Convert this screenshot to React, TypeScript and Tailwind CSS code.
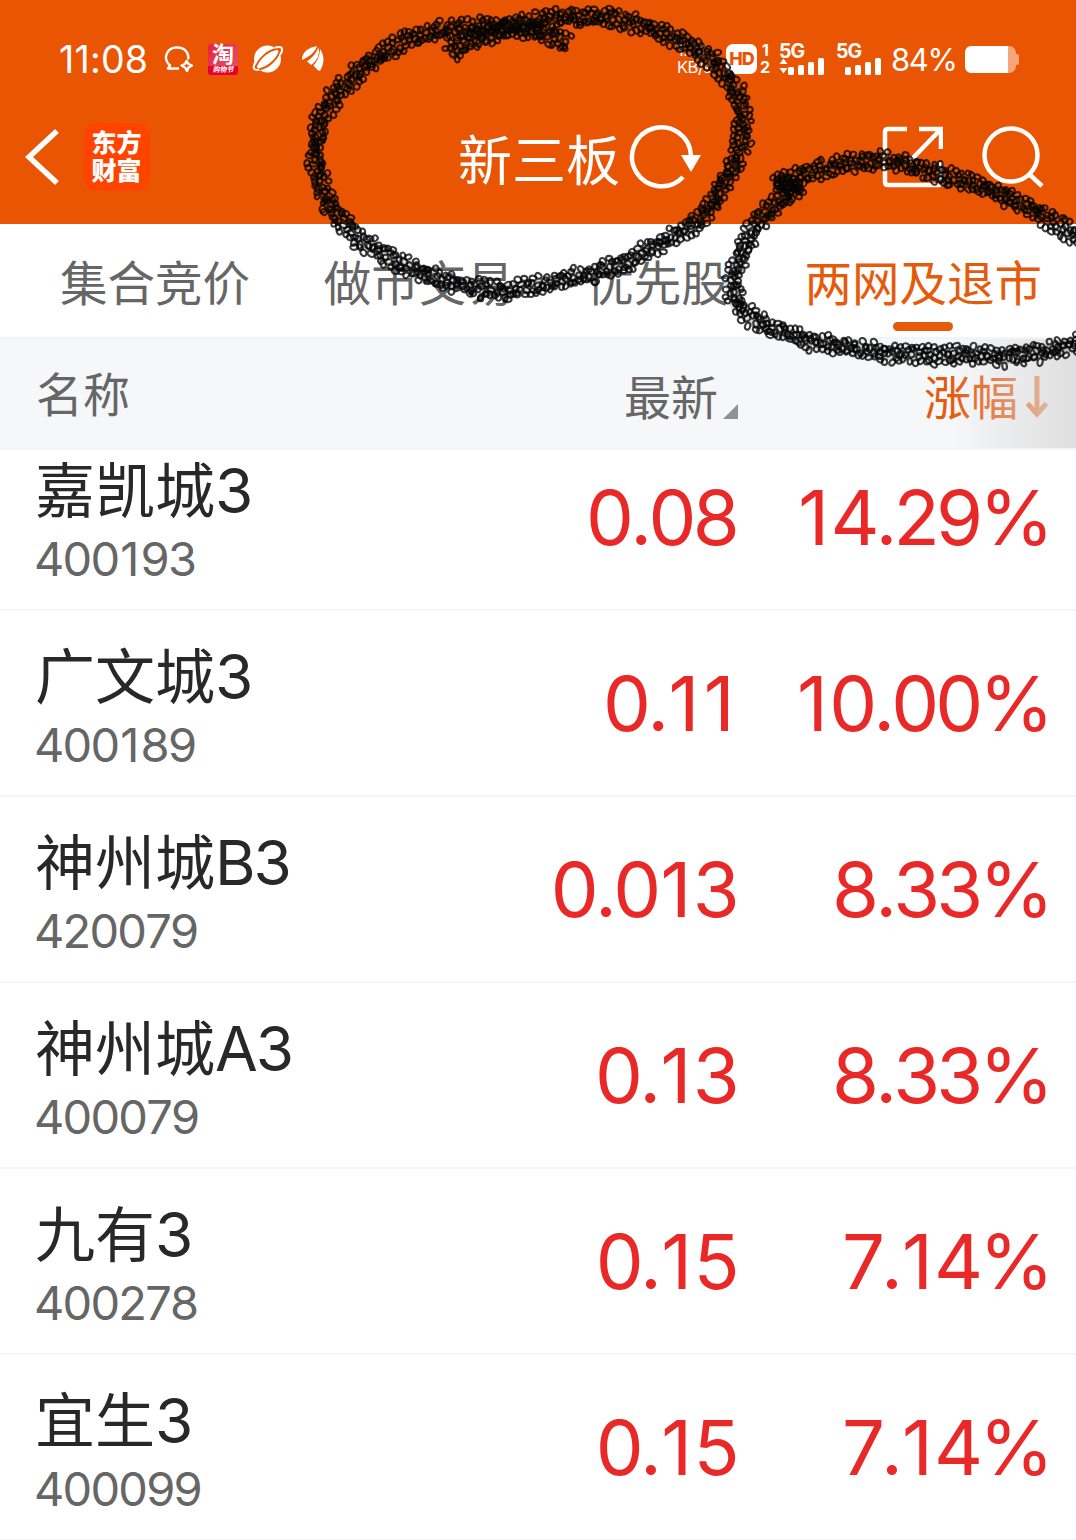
import React from 'react';

interface Stock {
  name: string;
  suffix: string;
  code: string;
  price: string;
  change: string;
}

const stocks: Stock[] = [
  { name: '嘉凯城', suffix: '3', code: '400193', price: '0.08', change: '14.29%' },
  { name: '广文城', suffix: '3', code: '400189', price: '0.11', change: '10.00%' },
  { name: '神州城', suffix: 'B3', code: '420079', price: '0.013', change: '8.33%' },
  { name: '神州城', suffix: 'A3', code: '400079', price: '0.13', change: '8.33%' },
  { name: '九有', suffix: '3', code: '400278', price: '0.15', change: '7.14%' },
  { name: '宜生', suffix: '3', code: '400099', price: '0.15', change: '7.14%' },
];

type Point = [number, number];

const titleLoop: Point[] = [
  [447, 53], [473, 41], [507, 28], [540, 20], [570, 17], [610, 17], [647, 27], [683, 41], [713, 61],
  [735, 87], [743, 113], [742, 143], [730, 173], [713, 203], [693, 226], [660, 243], [627, 262],
  [593, 273], [547, 284], [507, 291], [483, 289], [443, 281], [400, 263], [360, 240], [333, 211],
  [319, 180], [315, 153], [320, 122], [333, 97], [363, 67], [400, 43], [440, 30], [480, 27], [513, 27],
  [540, 32], [568, 43],
];

const tabLoop: Point[] = [
  [1080, 240], [1047, 218], [1020, 203], [987, 188], [953, 178], [920, 167], [887, 160], [860, 161],
  [830, 167], [797, 177], [775, 185], [800, 186], [767, 210], [750, 233], [740, 257], [732, 283],
  [736, 303], [753, 320], [780, 332], [813, 342], [853, 349], [887, 353], [927, 355], [967, 355],
  [1010, 357], [1043, 352], [1080, 342],
];

// small seeded generator so the brush looks the same on every render
const seeded = (seed: number) => () => {
  seed = (seed * 48271) % 2147483647;
  return seed / 2147483647;
};

const lanes = [-6.6, 2.2, -2.2, 6.6];

const brush = (points: Point[], seed: number) => {
  const rand = seeded(seed);
  const rings: { x: number; y: number; rx: number; ry: number; a: number }[] = [];
  for (let i = 0; i < points.length - 1; i++) {
    const [x1, y1] = points[i];
    const [x2, y2] = points[i + 1];
    const len = Math.hypot(x2 - x1, y2 - y1);
    const nx = -(y2 - y1) / len;
    const ny = (x2 - x1) / len;
    const count = Math.round(len / 1.4);
    for (let k = 0; k < count; k++) {
      const t = (k + rand() * 2.4) / count;
      // jittered lanes keep the beads spread over the whole band
      const off = lanes[k % 4] + (rand() * 2 - 1) * 3;
      rings.push({
        x: x1 + (x2 - x1) * t + nx * off,
        y: y1 + (y2 - y1) * t + ny * off,
        rx: 2.2 + rand() * 0.8,
        ry: 2.7 + rand() * 1.2,
        a: rand() * 180,
      });
    }
  }
  return rings;
};

const rings = [...brush(titleLoop, 7101), ...brush(tabLoop, 191337)];

const toLine = (points: Point[]) => points.map((p) => p.join(',')).join(' ');

const Scribbles: React.FC = () => (
  <svg className="absolute left-0 top-0 z-20 pointer-events-none" width="1076" height="400" viewBox="0 0 1076 400" fill="none">
    <g stroke="#000" strokeOpacity="0.14" strokeWidth="14" strokeLinejoin="bevel">
      <polyline points={toLine(titleLoop)} />
      <polyline points={toLine(tabLoop)} />
    </g>
    <g stroke="#050505" strokeWidth="2.1" strokeOpacity="0.78">
      {rings.map((r, i) => (
        <ellipse key={i} cx={r.x} cy={r.y} rx={r.rx} ry={r.ry} transform={`rotate(${r.a} ${r.x} ${r.y})`} />
      ))}
    </g>
  </svg>
);

// gives the narrow "1" some room on both sides
const Digits: React.FC<{ value: string; oneClass: string }> = ({ value, oneClass }) => (
  <>
    {value.split('').map((ch, i) => (
      <span key={i} className={ch === '1' ? oneClass : undefined}>{ch}</span>
    ))}
  </>
);

const Signal: React.FC<{ arrows?: boolean }> = ({ arrows }) => (
  <div className="w-[46px] h-[31px] flex flex-col justify-between">
    <span className="font-bold text-[19.5px] leading-[14px] tracking-[-1px]">5G</span>
    <svg width="46" height="17" viewBox="0 0 46 17" fill="white" className="-mt-[2px] overflow-visible">
      {arrows && <path d="M0.5 6L4.500 0.5L8.500 6zM0.5 10H8.500L4.500 15.500z" />}
      <rect x="9" y="9" width="6" height="8" rx="1.500" />
      <rect x="19" y="7" width="6" height="10" rx="1.500" />
      <rect x="29" y="4" width="6" height="13" rx="1.500" />
      <rect x="39" y="0" width="6" height="17" rx="1.500" />
    </svg>
  </div>
);

const StatusBar: React.FC = () => (
  <div className="h-[92px] pt-[26px] pl-[59px] pr-[57px] flex items-center justify-between text-white">
    <div className="flex items-center">
      <span className="w-[104px] pt-[2px] text-[37.5px] leading-[40px] tracking-[0.2px]">11:08</span>
      <svg width="31" height="30" viewBox="0 0 31 30" fill="none" stroke="white" strokeWidth="2.400" strokeLinejoin="round">
        <path d="M16 24.500H5L7 21.500C-1 14 4 3.500 14 3.500C22 3.500 26.500 9.500 25 15.500" />
        <path d="M23.500 17L25.500 20L29 21.500L25.500 23.500L24 27L22 23.500L18.500 21.500L22 20z" />
      </svg>
      <div className="ml-[14px] w-[30px] h-[31px] rounded-[3px] bg-linear-to-br from-[#e8203c] to-[#e8506a] flex flex-col items-center">
        <span className="h-[22px] text-[22px] leading-[21px] font-bold">淘</span>
        <span className="w-full h-[9px] rounded-b-[3px] bg-[#e6002d] text-center text-[7px] leading-[8px] font-bold italic">购物节</span>
      </div>
      <svg className="ml-[14px]" width="32" height="30" viewBox="0 0 32 30" fill="none">
        <circle cx="15.500" cy="15" r="13.500" fill="white" />
        <path d="M3 25C6 15 16 5.500 27 4.500" stroke="#ea5504" strokeWidth="2" />
        <path d="M5 25.500C15 25 25 16 28 6.500" stroke="#ea5504" strokeWidth="2" />
        <path d="M23 3.500Q31 1.500 30 6.500Q29.500 9 28 11M3 18.500Q-1 27.500 7.500 25.500" stroke="white" strokeWidth="2" />
      </svg>
      <svg className="ml-[18px]" width="22" height="26" viewBox="0 0 22 26" fill="white">
        <path d="M0 11Q3 2 15 0Q13 8 0 14z" />
        <path d="M5 15.500Q14 9 16.500 1Q19 11 9.500 19z" />
        <path d="M11.500 19.500Q18 12 18 3Q25 13 18 25L15.500 24z" />
      </svg>
    </div>
    <div className="flex items-center">
      <div className="w-[49px] text-[16.5px] leading-[17px] tracking-[-0.5px]">
        <div>1.70</div>
        <div>KB/s</div>
      </div>
      <div className="w-[31px] h-[30px] rounded-[7px] bg-white text-[#ea5504] text-[18px] leading-[30px] font-extrabold text-center tracking-[-1px]">HD</div>
      <div className="ml-[3px] w-[19px] h-[34px] text-[16px] leading-[17px] font-bold">
        <div className="pl-[2px]">1</div>
        <div>2</div>
      </div>
      <Signal arrows />
      <div className="w-[11px]" />
      <Signal />
      <span className="ml-[9px] w-[74px] pt-[2px] text-[31px] leading-[34px] tracking-[-1.4px]">84%</span>
      <svg width="54" height="27" viewBox="0 0 54 27">
        <rect x="0" y="0" width="51" height="27" rx="7" fill="#f7a679" />
        <rect x="50" y="8" width="4" height="11" rx="2" fill="#f7a679" />
        <path d="M7 0H43V27H7Q0 27 0 20V7Q0 0 7 0z" fill="white" />
      </svg>
    </div>
  </div>
);

const TitleBar: React.FC = () => (
  <div className="h-[132px] pl-[24px] pr-[31px] flex items-start justify-between text-white">
    <div className="flex items-center pt-[31px]">
      <svg width="38" height="68" viewBox="0 0 38 68" fill="none" stroke="white" strokeWidth="5.500">
        <path d="M33 8L5 34L33 60" />
      </svg>
      <div className="ml-[21px] w-[67px] h-[68px] rounded-[14px] bg-[#ff4400] flex flex-col items-center justify-center text-[25px] leading-[28px] font-black">
        <span>东方</span>
        <span>财富</span>
      </div>
    </div>
    <div className="flex items-center pt-[28px] pl-[130px]">
      <h1 className="pt-[5px] text-[54px] leading-[74px]">新三板</h1>
      <svg className="ml-[7px] -mt-[3px]" width="76" height="68" viewBox="0 0 76 68" fill="none">
        <path d="M64 32A29.500 29.500 0 1 0 56 53" stroke="white" strokeWidth="4.500" />
        <path d="M54 31H74L64 48z" fill="white" />
      </svg>
    </div>
    <div className="flex items-center pt-[32px]">
      <svg width="62" height="64" viewBox="0 0 62 64" fill="none" stroke="white" strokeWidth="4.500">
        <path d="M26 5H7Q4 5 4 8V58Q4 61 7 61H57Q60 61 60 58V38M38 5H60V25M60 5L29 37" />
      </svg>
      <svg className="ml-[38px]" width="64" height="64" viewBox="0 0 64 64" fill="none" stroke="white" strokeWidth="4.500">
        <circle cx="30" cy="31" r="26.500" />
        <path d="M47 49L61 62" />
      </svg>
    </div>
  </div>
);

const Tabs: React.FC = () => (
  <div className="h-[113px] pl-[60px] pr-[34px] pt-[24px] bg-white flex items-start justify-between text-[47.5px] leading-[72px] text-[#666]">
    <span>集合竞价</span>
    <span className="-ml-[2px]">做市交易</span>
    <span className="-ml-[3px]">优先股</span>
    <div className="flex flex-col items-center text-[#e65a0c]">
      <span>两网及退市</span>
      <span className="mt-[2px] w-[60px] h-[9px] rounded-full bg-[#e65a0c]" />
    </div>
  </div>
);

const ListHeader: React.FC = () => (
  <div className="relative z-10 h-[113px] pl-[36px] pr-[28px] bg-[#f6f7f9] border-y-2 border-[#f2f4f5] flex items-center text-[47px] text-[#666]">
    <span className="flex-1 pt-[3px]">名称</span>
    <div className="flex items-center pt-[9px]">
      <span>最新</span>
      <svg className="ml-[5px] mt-[26px]" width="15" height="15" viewBox="0 0 15 15">
        <path d="M15 0V15H0z" fill="#929296" />
      </svg>
    </div>
    <div className="w-[310px] pt-[9px] flex items-center justify-end text-[#e65a0c]">
      <span>涨幅</span>
      <svg className="ml-[8px] -mt-[2px]" width="22" height="42" viewBox="0 0 22 42" fill="none" stroke="#e65a0c" strokeWidth="5">
        <path d="M11 0V38M1.500 27.500L11 38L20.500 27.500" />
      </svg>
    </div>
    <div className="absolute right-0 top-0 w-[126px] h-full bg-linear-to-r from-[#e6e6e6]/0 to-[#dcdcdc]/90" />
  </div>
);

const StockRow: React.FC<{ stock: Stock }> = ({ stock }) => (
  <div className="h-[186px] pl-[35px] pr-[26px] border-b-2 border-[#f5f5f5] flex items-center">
    <div className="flex-1 pt-[8px]">
      <div className="text-[60px] leading-[76px] text-[#282828]">
        {stock.name}
        <span className="text-[62px] tracking-[-2px]">{stock.suffix}</span>
      </div>
      <div className="-ml-[1px] text-[47px] leading-[60px] tracking-[-1.8px] text-[#666]">
        <Digits value={stock.code} oneClass="ml-[2px] mr-[3px]" />
      </div>
    </div>
    <div className="pr-[2px] text-[76px] leading-[80px] tracking-[-3.7px] text-[#e92828]">
      <Digits value={stock.price} oneClass="ml-[3px] mr-[5px]" />
    </div>
    <div className="w-[312px] text-right text-[76px] leading-[80px] tracking-[-3.9px] text-[#e92828]">
      <Digits value={stock.change} oneClass="ml-[3px] mr-[5px]" />
    </div>
  </div>
);

const App: React.FC = () => {
  return (
    <div className="relative w-[1076px] h-[1540px] overflow-hidden bg-white font-['Inter','Noto_Sans_CJK_SC',sans-serif] [font-kerning:none]">
      <header className="bg-[#ea5504]">
        <StatusBar />
        <TitleBar />
      </header>
      <Tabs />
      <ListHeader />
      <div className="-mt-[25px]">
        {stocks.map((stock) => (
          <StockRow key={stock.code} stock={stock} />
        ))}
      </div>
      <Scribbles />
    </div>
  );
};

export default App;
